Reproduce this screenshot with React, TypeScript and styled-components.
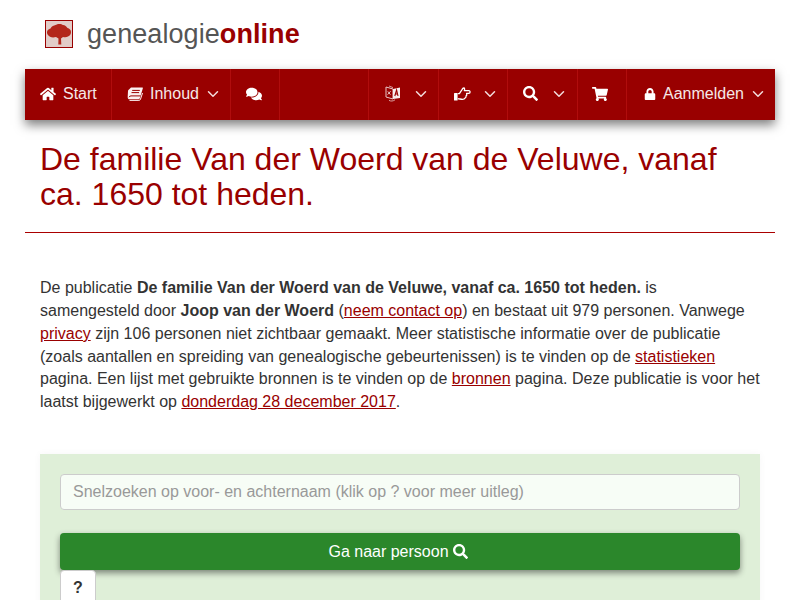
import React from 'react';
import styled, { createGlobalStyle } from 'styled-components';
import { FaHome, FaComments, FaSearch, FaShoppingCart, FaLock } from 'react-icons/fa';
import { FiChevronDown } from 'react-icons/fi';

const GlobalStyle = createGlobalStyle`
    html, body {
        margin: 0;
        height: 600px;
        overflow: hidden;
        background: #fff;
        font-family: "Liberation Sans", Arial, sans-serif;
        font-size: 16px;
        color: #333;
    }
    * {
        box-sizing: border-box;
    }
`

const Page = styled.div`
    width: 800px;
    height: 600px;
    overflow: hidden;
    padding: 0 25px;
`

const Brand = styled.div`
    display: flex;
    align-items: center;
    height: 69px;
    padding-left: 20px;
    padding-bottom: 1px;
`

const Logo = styled.svg`
    width: 28px;
    height: 28px;
    margin-right: 14px;
    display: block;
`

const BrandName = styled.div`
    font-size: 27px;
    color: #555;
    letter-spacing: 0.07px;

    b {
        color: #990000;
        font-weight: bold;
    }
`

const Nav = styled.nav`
    display: flex;
    height: 51px;
    background: #990000;
    box-shadow: 0 5px 10px rgba(0, 0, 0, 0.5);
`

const NavItem = styled.div<{ $width: number; $pad?: number; $last?: boolean }>`
    width: ${p => p.$width}px;
    flex: none;
    display: flex;
    align-items: center;
    padding-left: ${p => p.$pad ?? 15}px;
    padding-bottom: 2px;
    color: #fff;
    border-right: 1px solid ${p => p.$last ? 'transparent' : '#b00d0d'};
    white-space: nowrap;

    svg {
        display: block;
        flex: none;
    }
`

const NavLabel = styled.span`
    margin-left: 7px;
    color: #f5e8e8;
`

const Caret = styled(FiChevronDown)<{ $gap: number }>`
    color: #f3dcdc;
    margin-left: ${p => p.$gap}px;
`

const Title = styled.h1`
    margin: 0;
    padding: 22px 15px 20px;
    font-size: 32px;
    font-weight: normal;
    line-height: 35px;
    color: #990000;
    border-bottom: 1px solid #aa0000;
`

const Intro = styled.p`
    margin: 0;
    padding: 44px 15px 0;
    line-height: 22.86px;
    color: #333;

    a {
        color: #990000;
        text-decoration: underline;
    }
`

const SearchPanel = styled.div`
    margin: 40px 15px 0;
    padding: 20px 20px 0;
    height: 300px;
    background: #dfefd8;
    box-shadow: 0 0 8px rgba(0, 0, 0, 0.04);
`

const SearchInput = styled.input`
    display: block;
    width: 100%;
    height: 36px;
    padding: 6px 12px;
    font: 16px "Liberation Sans", Arial, sans-serif;
    background: #f7fdf6;
    border: 1px solid #ccc;
    border-radius: 4px;
    outline: none;

    &::placeholder {
        color: #999;
        opacity: 1;
    }
`

const GoButton = styled.div`
    display: flex;
    align-items: center;
    justify-content: center;
    gap: 4px;
    margin-top: 23px;
    height: 37px;
    padding-right: 4px;
    color: #fff;
    background: #2b872b;
    border-radius: 4px;
    box-shadow: 0 3px 6px rgba(0, 0, 0, 0.45);
`

const HelpButton = styled.div`
    display: flex;
    align-items: center;
    justify-content: center;
    width: 36px;
    height: 36px;
    font-weight: bold;
    color: #333;
    background: #fff;
    border: 1px solid #ccc;
    border-radius: 4px;
    position: relative;
`

function BookIcon() {
    return (
        <svg width="16" height="14" viewBox="0 0 16 14">
            <path d="M4 .5h11.200c.6 0 .8.5.6 1.100l-2.900 9.300c-.3.900-.8 1.400-1.800 1.400H2.600C1.400 12.300.6 11.400.7 10l.3-6c.1-.8.6-1 1-1.400z" fill="#fbf2f2" />
            <path d="M5.200 3.400h7.600M4.500 5.600h7.600M2 10.200c.3-.9 1.100-1.300 2-1.300h9.600" fill="none" stroke="#990000" strokeWidth="1" />
            <path d="M2.500 13.400h9.400c.8 0 1.300-.4 1.600-1.200l2-6.200" fill="none" stroke="#fbf2f2" strokeWidth="1" />
        </svg>
    );
}

function LanguageIcon() {
    return (
        <svg width="16" height="17" viewBox="0 0 16 17">
            <path d="M1 2l7 2v10L1 12z" fill="none" stroke="#e8c8c8" strokeWidth="1" />
            <path d="M8 4l7-1.500V13l-7 1z" fill="#f8eeee" />
            <path d="M9.800 11l1.800-6 1.400 6M10.400 9h2.400" fill="none" stroke="#990000" strokeWidth="1.1" />
            <path d="M2.600 9.600l3-3.400M2.800 6.400l2.600 3.200" fill="none" stroke="#eed4d4" strokeWidth="0.9" />
            <path d="M4 1l4 1.600M4 15.400c2 1 4 .8 6-.6" fill="none" stroke="#e8c8c8" strokeWidth="0.8" />
        </svg>
    );
}

function HandIcon() {
    return (
        <svg width="17" height="14" viewBox="0 0 17 14">
            <rect x="0" y="6" width="3.600" height="7.500" rx="0.5" fill="#fff" />
            <path d="M3.800 6.600h1.600L8 2.600c.4-.8 1-1.600 1.800-1.600.9 0 1 1.200.5 2.600h4.600c1.600 0 1.600 2.800-.1 2.800h-2.200c.4 1 .2 2-.5 2.500.1 1.100-.3 1.900-1.100 2.200-.4.900-1.400 1.300-2.500 1.300-1.400 0-3-.6-4.700-.8" fill="none" stroke="#fff" strokeWidth="1.300" strokeLinejoin="round" />
        </svg>
    );
}

export default function App() {
    return (
        <Page>
            <GlobalStyle />
            <Brand>
                <Logo viewBox="0 0 28 28">
                    <rect x="0.5" y="0.5" width="27" height="27" fill="#e2ccc8" stroke="#990000" />
                    <path d="M2 12c0-2 2-3 3.500-3.500C6.500 6 9 5.500 10.500 5c2-1.500 6-1.500 7.500 0 2 .2 3.500 1.500 4.500 3 2 .5 3.500 2 3.500 4s-1 3.500-3 4.500c-1.500 1-3.500.8-5 .5l-2 1.500.3 6h-3l.2-6-2.500-1.500c-2 .6-4 .8-6-.3-2-1-3-2.700-3-4.200z" fill="#b3261a" />
                </Logo>
                <BrandName>genealogie<b>online</b></BrandName>
            </Brand>
            <Nav>
                <NavItem $width={87}>
                    <FaHome size={16} />
                    <NavLabel>Start</NavLabel>
                </NavItem>
                <NavItem $width={119}>
                    <BookIcon />
                    <NavLabel>Inhoud</NavLabel>
                    <Caret size={18} $gap={5} />
                </NavItem>
                <NavItem $width={49}>
                    <FaComments size={16} />
                </NavItem>
                <NavItem $width={89} />
                <NavItem $width={70} $pad={16}>
                    <LanguageIcon />
                    <Caret size={18} $gap={11} />
                </NavItem>
                <NavItem $width={69}>
                    <HandIcon />
                    <Caret size={18} $gap={10} />
                </NavItem>
                <NavItem $width={70}>
                    <FaSearch size={15} />
                    <Caret size={18} $gap={12} />
                </NavItem>
                <NavItem $width={49} $pad={14}>
                    <FaShoppingCart size={16} />
                </NavItem>
                <NavItem $width={148} $pad={17} $last>
                    <FaLock size={12} />
                    <NavLabel>Aanmelden</NavLabel>
                    <Caret size={18} $gap={5} />
                </NavItem>
            </Nav>
            <Title>De familie Van der Woerd van de Veluwe, vanaf ca. 1650 tot heden.</Title>
            <Intro>
                De publicatie <b>De familie Van der Woerd van de Veluwe, vanaf ca. 1650 tot heden.</b> is
                samengesteld door <b>Joop van der Woerd</b> (<a>neem contact op</a>) en bestaat uit 979 personen.
                Vanwege <a>privacy</a> zijn 106 personen niet zichtbaar gemaakt. Meer statistische informatie over
                de publicatie (zoals aantallen en spreiding van genealogische gebeurtenissen) is te vinden op
                de <a>statistieken</a> pagina. Een lijst met gebruikte bronnen is te vinden op
                de <a>bronnen</a> pagina. Deze publicatie is voor het laatst bijgewerkt
                op <a>donderdag 28 december 2017</a>.
            </Intro>
            <SearchPanel>
                <SearchInput placeholder="Snelzoeken op voor- en achternaam (klik op ? voor meer uitleg)" />
                <GoButton>Ga naar persoon <FaSearch size={15} /></GoButton>
                <HelpButton>?</HelpButton>
            </SearchPanel>
        </Page>
    );
}
